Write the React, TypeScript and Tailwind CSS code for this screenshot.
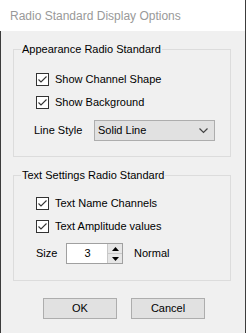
import React, { useState } from 'react';

const font = { fontFamily: "'Liberation Sans', Arial, sans-serif" };

function Check({ label, checked, onToggle }: { label: string; checked: boolean; onToggle: () => void }) {
  return (
    <label className="flex items-center h-[17px] ml-[22px] cursor-default" onClick={onToggle}>
      <span className="w-[13px] h-[13px] border border-[#333333] bg-white flex items-center justify-center">
        {checked && (
          <svg width="11" height="11" viewBox="0 0 11 11">
            <path d="M1.5 5.5 L4 8 L9.5 2.5" fill="none" stroke="#333333" strokeWidth="1.1" />
          </svg>
        )}
      </span>
      <span className="ml-[6px] text-[11px] text-black">{label}</span>
    </label>
  );
}

function Group({ title, children, className }: { title: string; children: React.ReactNode; className?: string }) {
  return (
    <fieldset className={`ml-[12px] w-[218px] border border-[#dcdcdc] ${className ?? ''}`}>
      <legend className="ml-[7px] px-[1px] text-[11px] leading-[14px] text-black">{title}</legend>
      {children}
    </fieldset>
  );
}

export default function App() {
  const [opts, setOpts] = useState({ shape: true, bg: true, names: true, amp: true });
  const [size, setSize] = useState(3);
  const flip = (k: keyof typeof opts) => setOpts({ ...opts, [k]: !opts[k] });

  return (
    <div className="w-[246px] h-[333px] flex flex-col bg-[#f0f0f0] border-r border-[#3c3c3c] select-none" style={font}>
      <div className="h-[31px] bg-white flex items-center pl-[10px] text-[12px] text-[#999999]">
        Radio Standard Display Options
      </div>

      <div className="flex-1 flex flex-col border-l border-[#3c3c3c]">
        <Group title="Appearance Radio Standard" className="mt-[11px] pb-[15px]">
          <div className="mt-[15px]">
            <Check label="Show Channel Shape" checked={opts.shape} onToggle={() => flip('shape')} />
          </div>
          <div className="mt-[6px]">
            <Check label="Show Background" checked={opts.bg} onToggle={() => flip('bg')} />
          </div>
          <div className="mt-[9px] flex items-center h-[21px] ml-[20px]">
            <span className="text-[11px] text-black w-[60px]">Line Style</span>
            <div className="w-[121px] h-[21px] bg-[#e1e1e1] border border-[#adadad] flex items-center justify-between pl-[3px] pr-[6px]">
              <span className="text-[11px] text-black">Solid Line</span>
              <svg width="9" height="6" viewBox="0 0 9 6">
                <path d="M0.5 0.5 L4.5 4.5 L8.5 0.5" fill="none" stroke="#444444" strokeWidth="1.2" />
              </svg>
            </div>
          </div>
        </Group>

        <Group title="Text Settings Radio Standard" className="mt-[11px] pb-[16px]">
          <div className="mt-[13px]">
            <Check label="Text Name Channels" checked={opts.names} onToggle={() => flip('names')} />
          </div>
          <div className="mt-[6px]">
            <Check label="Text Amplitude values" checked={opts.amp} onToggle={() => flip('amp')} />
          </div>
          <div className="mt-[8px] flex items-center h-[21px] ml-[22px]">
            <span className="text-[11px] text-black w-[30px]">Size</span>
            <div className="w-[57px] h-[21px] bg-white border border-[#a0a0a0] flex">
              <div className="flex-1 flex items-center justify-center text-[11px] text-black pl-[1px]">{size}</div>
              <div className="w-[15px] flex flex-col border-l border-[#c8c8c8]">
                <button
                  className="flex-1 bg-[#e6e6e6] border-b border-[#c8c8c8] flex items-center justify-center"
                  onClick={() => setSize(size + 1)}
                >
                  <svg width="7" height="4" viewBox="0 0 7 4"><path d="M0 4 L3.5 0 L7 4 Z" fill="#000" /></svg>
                </button>
                <button
                  className="flex-1 bg-[#e6e6e6] flex items-center justify-center"
                  onClick={() => setSize(Math.max(1, size - 1))}
                >
                  <svg width="7" height="4" viewBox="0 0 7 4"><path d="M0 0 L7 0 L3.5 4 Z" fill="#000" /></svg>
                </button>
              </div>
            </div>
            <span className="ml-[11px] text-[11px] text-black">Normal</span>
          </div>
        </Group>

        <div className="mt-[17px] ml-[42px] flex gap-[14px]">
          <button className="w-[74px] h-[21px] bg-[#e1e1e1] border border-[#adadad] text-[11px] text-black">OK</button>
          <button className="w-[74px] h-[21px] bg-[#e1e1e1] border border-[#adadad] text-[11px] text-black">Cancel</button>
        </div>
      </div>
    </div>
  );
}
